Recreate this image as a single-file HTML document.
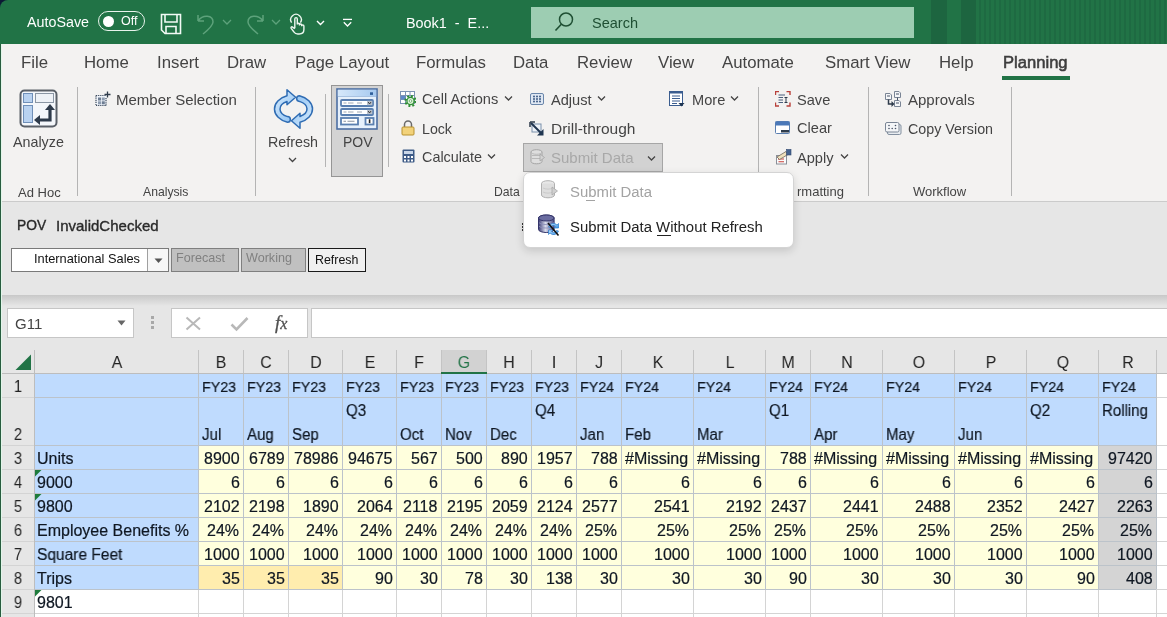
<!DOCTYPE html><html><head><meta charset="utf-8"><style>
html,body{margin:0;padding:0;width:1167px;height:617px;overflow:hidden;background:#fff;}
body{position:relative;font-family:"Liberation Sans",sans-serif;}
.t{position:absolute;white-space:nowrap;will-change:transform;}
.r{position:absolute;display:block;}
</style></head><body>
<div class="r" style="left:0px;top:0px;width:10px;height:10px;background:#0c1934;"></div>
<div class="r" style="left:0px;top:0px;width:1167px;height:44px;background:#217346;border-top-left-radius:8px;"></div>
<div class="r" style="left:931px;top:0px;width:16px;height:44px;background:#1d6540;"></div>
<div class="r" style="left:961px;top:0px;width:15px;height:44px;background:#1d6540;"></div>
<div class="r" style="left:976px;top:0;width:191px;height:44px;background:repeating-linear-gradient(90deg,#217346 0 3px,#1e6a42 3px 5px)"></div>
<div class="t" style="left:27px;top:14.90px;font-size:14.3px;line-height:14.3px;color:#fff;">AutoSave</div>
<div class="r" style="left:98px;top:11px;width:47px;height:20px;background:transparent;border:1.5px solid #e8f3ec;border-radius:11px;box-sizing:border-box;"></div>
<div class="r" style="left:103px;top:16px;width:11px;height:11px;border-radius:50%;background:#fff"></div>
<div class="t" style="left:121px;top:14.92px;font-size:12.5px;line-height:12.5px;color:#fff;">Off</div>
<svg class="r" style="left:160px;top:13px;" width="22" height="22" viewBox="0 0 22 22"><path d="M1.5 1.5 H20.5 V20.5 H5 L1.5 17 Z" fill="none" stroke="#f2faf5" stroke-width="1.6"/><path d="M5 1.5 V9 H17 V1.5" fill="none" stroke="#f2faf5" stroke-width="1.6"/><path d="M6 20.5 V13.5 H16 V20.5" fill="none" stroke="#f2faf5" stroke-width="1.6"/></svg>
<svg class="r" style="left:196px;top:13px;" width="22" height="22" viewBox="0 0 22 22"><path d="M2 8 L2 2 M2 8 L8 8 M2 8 C7 1 17 2 17 9 C17 13 12 17 7 21" fill="none" stroke="#5da27b" stroke-width="1.5"/></svg>
<svg class="r" style="left:222px;top:19px;" width="10" height="7" viewBox="0 0 10 7"><path d="M1 1 L5 5 L9 1" fill="none" stroke="#5da27b" stroke-width="1.3"/></svg>
<svg class="r" style="left:244px;top:13px;" width="22" height="22" viewBox="0 0 22 22"><path d="M19 2 L19 8 M19 8 L13 8 M19 8 C14 1 4 2 4 9 C4 13 9 17 14 21" fill="none" stroke="#5da27b" stroke-width="1.5"/></svg>
<svg class="r" style="left:271px;top:19px;" width="10" height="7" viewBox="0 0 10 7"><path d="M1 1 L5 5 L9 1" fill="none" stroke="#5da27b" stroke-width="1.3"/></svg>
<svg class="r" style="left:288px;top:13px;" width="18" height="22" viewBox="0 0 18 22"><path d="M3.6 9.6 A5.3 5.3 0 1 1 12.4 9.6" fill="none" stroke="#eef8f1" stroke-width="1.4"/><path d="M6.8 15.2 V5.9 A1.25 1.25 0 0 1 9.3 5.9 V11.6 M9.3 11.4 A1.1 1.1 0 0 1 11.5 11.4 V12.6 M11.5 12.1 A1.1 1.1 0 0 1 13.7 12.1 V13.2 M13.7 13 A1.1 1.1 0 0 1 15.9 13 V16.5 C15.9 19.6 14.2 21 11.2 21 H9.8 C7.8 21 6.8 20.2 5.8 18.8 L3.2 15.4 C2.6 14.4 3.6 13.4 4.6 14.1 L6.8 15.8" fill="none" stroke="#eef8f1" stroke-width="1.4" stroke-linejoin="round"/></svg>
<svg class="r" style="left:316px;top:20px;" width="9" height="6" viewBox="0 0 9 6"><path d="M1 1 L4.5 4.5 L8 1" fill="none" stroke="#fff" stroke-width="1.4"/></svg>
<svg class="r" style="left:342px;top:18px;" width="11" height="10" viewBox="0 0 11 10"><path d="M1 1.4 H10" stroke="#fff" stroke-width="1.3"/><path d="M1.8 4.2 L5.5 8 L9.2 4.2" fill="none" stroke="#fff" stroke-width="1.3"/></svg>
<div class="t" style="left:405.5px;top:16.41px;font-size:14.4px;line-height:14.4px;color:#fff;">Book1&nbsp; -&nbsp; E...</div>
<div class="r" style="left:531px;top:7px;width:383px;height:31px;background:#9dcdb2;"></div>
<svg class="r" style="left:553px;top:11px;" width="22" height="22" viewBox="0 0 22 22"><circle cx="13" cy="8.5" r="6.5" fill="none" stroke="#1f4f33" stroke-width="1.5"/><path d="M8.3 13.2 L2.5 19.5" stroke="#1f4f33" stroke-width="1.6"/></svg>
<div class="t" style="left:592px;top:15.73px;font-size:14.5px;line-height:14.5px;color:#1f4f33;">Search</div>
<div class="r" style="left:0px;top:44px;width:1167px;height:157px;background:#f3f2f1;"></div>
<div class="t" style="left:21px;top:55.08px;font-size:16.8px;line-height:16.8px;color:#444;">File</div>
<div class="t" style="left:83.5px;top:55.08px;font-size:16.8px;line-height:16.8px;color:#444;">Home</div>
<div class="t" style="left:157px;top:55.08px;font-size:16.8px;line-height:16.8px;color:#444;">Insert</div>
<div class="t" style="left:227px;top:55.08px;font-size:16.8px;line-height:16.8px;color:#444;">Draw</div>
<div class="t" style="left:295px;top:55.08px;font-size:16.8px;line-height:16.8px;color:#444;">Page Layout</div>
<div class="t" style="left:416px;top:55.08px;font-size:16.8px;line-height:16.8px;color:#444;">Formulas</div>
<div class="t" style="left:513px;top:55.08px;font-size:16.8px;line-height:16.8px;color:#444;">Data</div>
<div class="t" style="left:577px;top:55.08px;font-size:16.8px;line-height:16.8px;color:#444;">Review</div>
<div class="t" style="left:658px;top:55.08px;font-size:16.8px;line-height:16.8px;color:#444;">View</div>
<div class="t" style="left:722px;top:55.08px;font-size:16.8px;line-height:16.8px;color:#444;">Automate</div>
<div class="t" style="left:825px;top:55.08px;font-size:16.8px;line-height:16.8px;color:#444;">Smart View</div>
<div class="t" style="left:939px;top:55.08px;font-size:16.8px;line-height:16.8px;color:#444;">Help</div>
<div class="t" style="left:1002.8px;top:55.25px;font-size:16.6px;line-height:16.6px;color:#3d3d3d;-webkit-text-stroke:0.55px #3d3d3d;">Planning</div>
<div class="r" style="left:1002px;top:76px;width:68px;height:4px;background:#217346;"></div>
<div class="r" style="left:0px;top:201px;width:1167px;height:1px;background:#cbcbcb;"></div>
<div class="r" style="left:77px;top:87px;width:1px;height:109px;background:#b4b4b4;"></div>
<div class="r" style="left:255px;top:87px;width:1px;height:109px;background:#b4b4b4;"></div>
<div class="r" style="left:325px;top:94px;width:1px;height:73px;background:#b4b4b4;"></div>
<div class="r" style="left:388px;top:94px;width:1px;height:73px;background:#b4b4b4;"></div>
<div class="r" style="left:758px;top:87px;width:1px;height:109px;background:#b4b4b4;"></div>
<div class="r" style="left:868px;top:87px;width:1px;height:109px;background:#b4b4b4;"></div>
<div class="r" style="left:1011px;top:87px;width:1px;height:109px;background:#b4b4b4;"></div>
<svg class="r" style="left:19px;top:89px;" width="40" height="40" viewBox="0 0 40 40"><rect x="1.5" y="1.5" width="36" height="36" rx="4" fill="#f4f7fb" stroke="#5a6068" stroke-width="2"/><rect x="4.5" y="4.5" width="9" height="9" fill="#b9d2f0" stroke="#6f8fb8" stroke-width="1"/><rect x="4.5" y="16.5" width="9" height="17" fill="#b9d2f0" stroke="#6f8fb8" stroke-width="1"/><rect x="16.5" y="4.5" width="18" height="9" fill="#eef2f7" stroke="#8a96a4" stroke-width="1"/><path d="M31 19 V31 H19" fill="none" stroke="#2e3b4b" stroke-width="3.2"/><path d="M31 15 L26 21 H36 Z" fill="#2e3b4b"/><path d="M15 31 L21 26 V36 Z" fill="#2e3b4b"/></svg>
<div class="t" style="left:13.2px;top:135.10px;font-size:14.3px;line-height:14.3px;color:#444;">Analyze</div>
<div class="t" style="left:17.5px;top:185.50px;font-size:13px;line-height:13px;color:#444;">Ad Hoc</div>
<svg class="r" style="left:95px;top:91px;" width="16" height="16" viewBox="0 0 16 16"><rect x="1" y="4" width="10.5" height="11" fill="#eef3f9"/><path d="M1 4.5 H11 M1 14.5 H11 M1 4.5 V14.5 M11 7 V14.5" fill="none" stroke="#3c4a5c" stroke-width="1.2" stroke-dasharray="1.2 0.9"/><rect x="3" y="6.5" width="3" height="3" fill="#6d7d92"/><rect x="6.8" y="6.5" width="3" height="3" fill="#8d9cb0"/><rect x="3" y="10.3" width="3" height="3" fill="#8d9cb0"/><rect x="6.8" y="10.3" width="3" height="3" fill="#6d7d92"/><path d="M12.5 0.5 V6.5 M9.5 3.5 H15.5" stroke="#2e3b4b" stroke-width="1.3"/></svg>
<div class="t" style="left:116.3px;top:92.00px;font-size:15px;line-height:15px;color:#444;">Member Selection</div>
<div class="t" style="left:143px;top:186.27px;font-size:12.2px;line-height:12.2px;color:#444;">Analysis</div>
<svg class="r" style="left:272px;top:88px;" width="43" height="42" viewBox="0 0 43 42"><defs><linearGradient id="rg" x1="0" y1="0" x2="1" y2="1"><stop offset="0" stop-color="#d8ecfd"/><stop offset="1" stop-color="#8cc0f2"/></linearGradient></defs><g id="arr"><path d="M15 7.84 A19 14 0 0 0 15.5 34.28 A2.84 2.84 0 0 0 15.5 28.6 A13.5 8.5 0 0 1 15 13.55 L15 16.8 L23.6 9.2 L15 1.7 Z" fill="url(#rg)" stroke="#2f6cb3" stroke-width="1.5" stroke-linejoin="round"/></g><use href="#arr" transform="rotate(180 21.5 21)"/></svg>
<div class="t" style="left:268.3px;top:134.90px;font-size:14.3px;line-height:14.3px;color:#444;">Refresh</div>
<svg class="r" style="left:288px;top:157px;" width="10" height="7" viewBox="0 0 10 7"><path d="M1 1 L4.5 4.5 L8 1" fill="none" stroke="#444" stroke-width="1.3"/></svg>
<div class="r" style="left:331px;top:85px;width:52px;height:92px;background:#d3d3d3;border:1px solid #959595;box-sizing:border-box;"></div>
<svg class="r" style="left:336px;top:88px;" width="42" height="42" viewBox="0 0 42 42"><defs><linearGradient id="pg" x1="0" y1="0" x2="1" y2="0"><stop offset="0" stop-color="#d6e8fa"/><stop offset="1" stop-color="#a6c9ef"/></linearGradient></defs><rect x="1" y="1" width="40" height="40" fill="#e6f0fb" stroke="#4d6fa3" stroke-width="1.6"/><rect x="1.8" y="1.8" width="38.4" height="6.4" fill="url(#pg)"/><path d="M1.8 8.5 H40.2" stroke="#9bb8da" stroke-width="0.8"/><rect x="34" y="4.3" width="3" height="2.6" fill="#2f5f9a"/><rect x="5" y="12" width="32" height="6" rx="1" fill="#fff" stroke="#5a7fb0" stroke-width="1.8"/><path d="M7.5 15 H10.5 M12 15 H17.5 M21 15 H26" stroke="#a0a8b4" stroke-width="1.1"/><rect x="31" y="12.9" width="5.2" height="4.2" fill="#b9c0ca"/><path d="M32.2 14 L33.6 16 L35 14" fill="none" stroke="#333" stroke-width="0.9"/><rect x="5" y="21" width="32" height="6" rx="1" fill="#fff" stroke="#5a7fb0" stroke-width="1.8"/><path d="M7.5 24 H10.5 M12 24 H17.5 M21 24 H26" stroke="#a0a8b4" stroke-width="1.1"/><rect x="31" y="21.9" width="5.2" height="4.2" fill="#b9c0ca"/><path d="M32.2 23 L33.6 25 L35 23" fill="none" stroke="#333" stroke-width="0.9"/><rect x="5" y="30" width="17" height="6.5" fill="#fff" stroke="#5a7fb0" stroke-width="1.8"/><path d="M7.5 33.2 H10 M11.5 33.2 H18.5" stroke="#8a93a0" stroke-width="1.1"/><rect x="29.5" y="30" width="8" height="6.5" fill="#fff" stroke="#5a7fb0" stroke-width="1.8"/><rect x="32.8" y="31.3" width="1.6" height="3.8" fill="#222"/></svg>
<div class="t" style="left:343px;top:134.95px;font-size:14px;line-height:14px;color:#444;">POV</div>
<svg class="r" style="left:399px;top:90px;" width="17" height="17" viewBox="0 0 17 17"><rect x="1.5" y="1.5" width="14" height="12" fill="#fff" stroke="#7d93b3" stroke-width="1"/><path d="M1.5 5.5 H15.5 M1.5 9.5 H15.5 M6.5 1.5 V13.5 M11 1.5 V13.5" stroke="#7d93b3" stroke-width="1"/><rect x="2" y="6" width="4.5" height="3.5" fill="#5f88c8"/><circle cx="11.5" cy="11" r="5" fill="none" stroke="#2f8f35" stroke-width="2.2" stroke-dasharray="1.9 2.02"/><circle cx="11.5" cy="11" r="3.6" fill="#dff3da" stroke="#2f8f35" stroke-width="1.3"/><circle cx="11.5" cy="11" r="1.3" fill="#fff" stroke="#4aa04a" stroke-width="0.7"/></svg>
<div class="t" style="left:422.4px;top:92.34px;font-size:14.6px;line-height:14.6px;color:#444;">Cell Actions</div>
<svg class="r" style="left:504px;top:95px;" width="9" height="7" viewBox="0 0 9 7"><path d="M1 1.5 L4.5 5 L8 1.5" fill="none" stroke="#444" stroke-width="1.3"/></svg>
<svg class="r" style="left:401px;top:120px;" width="14" height="16" viewBox="0 0 14 16"><path d="M3.5 7 V4.5 A3.5 3.5 0 0 1 10.5 4.5 V7" fill="none" stroke="#6b6b6b" stroke-width="1.5"/><rect x="1" y="7" width="12" height="8" rx="1" fill="#f2d27a" stroke="#b8912e" stroke-width="1"/></svg>
<div class="t" style="left:422.4px;top:121.58px;font-size:14.2px;line-height:14.2px;color:#444;">Lock</div>
<svg class="r" style="left:402px;top:149px;" width="13" height="15" viewBox="0 0 13 15"><rect x="0.5" y="0.5" width="12" height="13" rx="1" fill="#3d5a86"/><rect x="2" y="2" width="9" height="3" fill="#c9d6e8"/><g fill="#fff"><rect x="2" y="7" width="2" height="2"/><rect x="5.5" y="7" width="2" height="2"/><rect x="9" y="7" width="2" height="2"/><rect x="2" y="10.5" width="2" height="2"/><rect x="5.5" y="10.5" width="2" height="2"/><rect x="9" y="10.5" width="2" height="2"/></g></svg>
<div class="t" style="left:422.4px;top:150.11px;font-size:14.4px;line-height:14.4px;color:#444;">Calculate</div>
<svg class="r" style="left:487px;top:153px;" width="9" height="7" viewBox="0 0 9 7"><path d="M1 1.5 L4.5 5 L8 1.5" fill="none" stroke="#444" stroke-width="1.3"/></svg>
<svg class="r" style="left:530px;top:93px;" width="15" height="13" viewBox="0 0 15 13"><rect x="0.5" y="0.5" width="13" height="11" rx="1.5" fill="#dfe8f3" stroke="#6a86aa" stroke-width="1"/><g fill="#3e5c86"><circle cx="4" cy="3.5" r="1"/><circle cx="7" cy="3.5" r="1"/><circle cx="10" cy="3.5" r="1"/><circle cx="4" cy="6" r="1"/><circle cx="7" cy="6" r="1"/><circle cx="10" cy="6" r="1"/><circle cx="4" cy="8.5" r="1"/><circle cx="7" cy="8.5" r="1"/><circle cx="10" cy="8.5" r="1"/></g></svg>
<div class="t" style="left:551.3px;top:92.64px;font-size:14.6px;line-height:14.6px;color:#444;">Adjust</div>
<svg class="r" style="left:597px;top:95px;" width="9" height="7" viewBox="0 0 9 7"><path d="M1 1.5 L4.5 5 L8 1.5" fill="none" stroke="#444" stroke-width="1.3"/></svg>
<svg class="r" style="left:529px;top:121px;" width="16" height="15" viewBox="0 0 16 15"><path d="M1 1 H6 M1 1 V6" stroke="#2e3b4b" stroke-width="1.5" fill="none"/><rect x="3" y="3" width="9" height="8" fill="#eef3f9" stroke="#7a90ab" stroke-width="1"/><path d="M2 2 L12 12" stroke="#1f3550" stroke-width="2"/><path d="M14.5 14.5 L14.5 8 L8 14.5 Z" fill="#1f3550"/></svg>
<div class="t" style="left:551.3px;top:120.88px;font-size:15.5px;line-height:15.5px;color:#444;">Drill-through</div>
<div class="r" style="left:523px;top:143px;width:140px;height:29px;background:#d2d2d2;border:1px solid #a6a6a6;box-sizing:border-box;"></div>
<svg class="r" style="left:530px;top:149px;" width="15" height="16" viewBox="0 0 15 16"><path d="M1 3 A5.5 2.3 0 0 1 12 3 V12.5 A5.5 2.3 0 0 1 1 12.5 Z" fill="#dedede" stroke="#a4a4a4" stroke-width="1"/><path d="M1 3 A5.5 2.3 0 0 0 12 3 M2 6.5 H11 M2 9.5 H11" fill="none" stroke="#b4b4b4" stroke-width="0.9"/><path d="M10 5 L14.5 8.5 L10 12 Z" fill="#d4d4d4" stroke="#a4a4a4" stroke-width="0.8"/></svg>
<div class="t" style="left:551.3px;top:149.90px;font-size:15px;line-height:15px;color:#a8a8a8;">Submit Data</div>
<svg class="r" style="left:647px;top:155px;" width="9" height="7" viewBox="0 0 9 7"><path d="M1 1.5 L4.5 5 L8 1.5" fill="none" stroke="#444" stroke-width="1.3"/></svg>
<svg class="r" style="left:669px;top:91px;" width="16" height="16" viewBox="0 0 16 16"><rect x="0.5" y="0.5" width="13" height="14" fill="#fff" stroke="#3a5d8f" stroke-width="1"/><rect x="0.5" y="0.5" width="13" height="2" fill="#3a5d8f"/><path d="M3 5 H11 M3 7.5 H11 M3 10 H11 M3 12.5 H8" stroke="#3a5d8f" stroke-width="1"/><path d="M9.5 12 H15.5 L12.5 15.5 Z" fill="#1f3550"/></svg>
<div class="t" style="left:691.7px;top:92.64px;font-size:14.6px;line-height:14.6px;color:#444;">More</div>
<svg class="r" style="left:730px;top:95px;" width="9" height="7" viewBox="0 0 9 7"><path d="M1 1.5 L4.5 5 L8 1.5" fill="none" stroke="#444" stroke-width="1.3"/></svg>
<div class="t" style="left:493.8px;top:186.27px;font-size:12.2px;line-height:12.2px;color:#444;">Data</div>
<svg class="r" style="left:775px;top:91px;" width="16" height="16" viewBox="0 0 16 16"><g stroke="#b8403a" stroke-width="1.4" fill="none"><path d="M0.5 4 V0.5 H4 M11.5 0.5 H15 V4 M15 11.5 V15 H11.5 M4 15 H0.5 V11.5"/></g><path d="M3.5 4 H10 M3.5 6.5 H8 M3.5 9 H8 M3.5 11.5 H8" stroke="#4a5f7c" stroke-width="1"/><path d="M9.5 6.5 H12.5 M11 6.5 V11.5 M9.5 11.5 H12.5" stroke="#2e3b4b" stroke-width="1"/></svg>
<div class="t" style="left:797.4px;top:92.64px;font-size:14.6px;line-height:14.6px;color:#444;">Save</div>
<svg class="r" style="left:775px;top:121px;" width="16" height="14" viewBox="0 0 16 14"><rect x="0.5" y="0.5" width="14" height="12" rx="1" fill="#fff" stroke="#5a7fb0" stroke-width="1"/><rect x="0.5" y="0.5" width="14" height="4" fill="#4a78b8"/><rect x="6" y="9" width="8" height="2.5" fill="#2e3b4b"/></svg>
<div class="t" style="left:797.4px;top:121.24px;font-size:14.6px;line-height:14.6px;color:#444;">Clear</div>
<svg class="r" style="left:775px;top:149px;" width="17" height="16" viewBox="0 0 17 16"><rect x="1.5" y="6.5" width="10" height="8.5" fill="#fbfbfb" stroke="#8a8f98" stroke-width="1"/><path d="M3.5 10 H9 M3.5 12.8 H9" stroke="#c8403a" stroke-width="1.1"/><rect x="3.3" y="9.3" width="1.2" height="1.4" fill="#c8403a"/><path d="M2 8 L11 2.5 L13 5.5 L4.5 10.5 Z" fill="#efe0bc" stroke="#7d7466" stroke-width="0.9"/><rect x="11.5" y="0.5" width="4.5" height="5.5" fill="#46638f" stroke="#2e466e" stroke-width="0.6"/></svg>
<div class="t" style="left:797.4px;top:150.64px;font-size:14.6px;line-height:14.6px;color:#444;">Apply</div>
<svg class="r" style="left:840px;top:153px;" width="9" height="7" viewBox="0 0 9 7"><path d="M1 1.5 L4.5 5 L8 1.5" fill="none" stroke="#444" stroke-width="1.3"/></svg>
<div class="t" style="left:796.6px;top:185.30px;font-size:13px;line-height:13px;color:#444;">rmatting</div>
<svg class="r" style="left:884px;top:90px;" width="18" height="18" viewBox="0 0 18 18"><path d="M1.5 3.5 H6 L7.5 5 V9.5 H1.5 Z" fill="#f4f6f8" stroke="#7a8595"/><path d="M10.5 1.5 H15 L16.5 3 V7.5 H10.5 Z" fill="#f4f6f8" stroke="#7a8595"/><path d="M10.5 10.5 H15 L16.5 12 V16.5 H10.5 Z" fill="#f4f6f8" stroke="#7a8595"/><path d="M3 6 H6 M12 4 H15 M12 13 H15 M13.5 7.5 V10.5" stroke="#4a5568" stroke-width="1"/><path d="M4.5 9.5 V14 H8" stroke="#2e3b4b" stroke-width="1.5" fill="none"/><path d="M7.5 11 L10.5 14 L7.5 17 Z" fill="#2e3b4b"/></svg>
<div class="t" style="left:907.5px;top:92.30px;font-size:15px;line-height:15px;color:#444;">Approvals</div>
<svg class="r" style="left:884px;top:122px;" width="18" height="13" viewBox="0 0 18 13"><rect x="3.5" y="2.5" width="13.5" height="10" rx="1.5" fill="#e8ecf0" stroke="#8390a0"/><rect x="1.5" y="0.5" width="13.5" height="9.5" rx="1.5" fill="#f4f6f8" stroke="#7a8595"/><g fill="#4a5568"><circle cx="5" cy="3.5" r="0.8"/><circle cx="5" cy="6.5" r="0.8"/><circle cx="8.2" cy="6.5" r="0.8"/><circle cx="11.5" cy="3.5" r="0.8"/><circle cx="11.5" cy="6.5" r="0.8"/></g></svg>
<div class="t" style="left:907.5px;top:121.90px;font-size:14.3px;line-height:14.3px;color:#444;">Copy Version</div>
<div class="t" style="left:912.6px;top:185.30px;font-size:13px;line-height:13px;color:#444;">Workflow</div>
<div class="r" style="left:0px;top:202px;width:1167px;height:93px;background:#e6e6e6;"></div>
<div class="r" style="left:0px;top:295px;width:1167px;height:1px;background:#c9c9c9;"></div>
<div class="r" style="left:0;top:296px;width:1167px;height:10px;background:linear-gradient(#cbcbcb,#e6e6e6)"></div>
<div class="r" style="left:0px;top:306px;width:1167px;height:44px;background:#e6e6e6;"></div>
<div class="t" style="left:16.7px;top:219.32px;font-size:13.8px;line-height:13.8px;color:#2a2a2a;-webkit-text-stroke:0.35px #2a2a2a;">POV</div>
<div class="t" style="left:55.5px;top:218.30px;font-size:15px;line-height:15px;color:#2a2a2a;-webkit-text-stroke:0.35px #2a2a2a;">InvalidChecked</div>
<div class="r" style="left:11px;top:248px;width:158px;height:24px;background:#fff;border:1px solid #7a7a7a;box-sizing:border-box;"></div>
<div class="r" style="left:147px;top:249px;width:1px;height:22px;background:#a0a0a0;"></div>
<div class="r" style="left:148px;top:249px;width:20px;height:22px;background:#f7f7f7;"></div>
<svg class="r" style="left:154px;top:258px;" width="9" height="6" viewBox="0 0 9 6"><path d="M0.5 0.5 H8.5 L4.5 5 Z" fill="#555"/></svg>
<div class="t" style="left:33.6px;top:253.16px;font-size:12.8px;line-height:12.8px;color:#111;">International Sales</div>
<div class="r" style="left:171px;top:248px;width:68px;height:24px;background:#c0c0c0;border:1px solid #7f7f7f;box-sizing:border-box;"></div>
<div class="t" style="left:176px;top:252.33px;font-size:12.6px;line-height:12.6px;color:#808080;">Forecast</div>
<div class="r" style="left:241px;top:248px;width:65px;height:24px;background:#c0c0c0;border:1px solid #7f7f7f;box-sizing:border-box;"></div>
<div class="t" style="left:246px;top:252.33px;font-size:12.6px;line-height:12.6px;color:#808080;">Working</div>
<div class="r" style="left:308px;top:248px;width:58px;height:24px;background:#f0f0f0;border:1.5px solid #1a1a1a;box-sizing:border-box;"></div>
<div class="t" style="left:315.3px;top:254.20px;font-size:12.4px;line-height:12.4px;color:#111;">Refresh</div>
<div class="r" style="left:521.5px;top:223px;width:1.5px;height:8px;background:#333;background:repeating-linear-gradient(#333 0 2px,transparent 2px 3px)"></div>
<div class="r" style="left:7px;top:308px;width:127px;height:30px;background:#fff;border:1px solid #c6c6c6;box-sizing:border-box;"></div>
<div class="t" style="left:14.6px;top:316.30px;font-size:15px;line-height:15px;color:#444;">G11</div>
<svg class="r" style="left:117px;top:320px;" width="9" height="6" viewBox="0 0 9 6"><path d="M0.5 0.5 H8.5 L4.5 5.5 Z" fill="#666"/></svg>
<div class="r" style="left:151px;top:316px;width:3px;height:3px;background:#a8a8a8;"></div>
<div class="r" style="left:151px;top:321px;width:3px;height:3px;background:#a8a8a8;"></div>
<div class="r" style="left:151px;top:326px;width:3px;height:3px;background:#a8a8a8;"></div>
<div class="r" style="left:171px;top:308px;width:137px;height:30px;background:#fff;border:1px solid #c6c6c6;box-sizing:border-box;"></div>
<svg class="r" style="left:185px;top:316px;" width="17" height="15" viewBox="0 0 17 15"><path d="M1.5 1.5 L15 13.5 M15 1.5 L1.5 13.5" stroke="#b8b8b8" stroke-width="2"/></svg>
<svg class="r" style="left:230px;top:316px;" width="19" height="16" viewBox="0 0 19 16"><path d="M1.5 8.5 L6.5 13.5 L17.5 2" fill="none" stroke="#b8b8b8" stroke-width="2.6"/></svg>
<div class="t" style="left:275px;top:312.92px;font-size:19px;line-height:19px;color:#505050;font-family:'Liberation Serif',serif;-webkit-text-stroke:0.3px #505050;"><i>f</i><i style="font-size:16px">x</i></div>
<div class="r" style="left:311px;top:308px;width:856px;height:30px;background:#fff;border:1px solid #c6c6c6;border-right:none;box-sizing:border-box;"></div>
<div class="r" style="left:1px;top:374px;width:1166px;height:243px;background:#fff;"></div>
<div class="r" style="left:1px;top:350px;width:1166px;height:23px;background:#e6e6e6;"></div>
<div class="r" style="left:1px;top:374px;width:33px;height:243px;background:#e6e6e6;"></div>
<div class="r" style="left:442px;top:350px;width:44px;height:23px;background:#d2d2d2;"></div>
<div class="r" style="left:441px;top:372px;width:46px;height:2px;background:#217346;"></div>
<svg class="r" style="left:15px;top:354px;" width="17" height="17" viewBox="0 0 17 17"><path d="M16 0.5 V16 H0.5 Z" fill="#217346"/></svg>
<div class="r" style="left:34px;top:373px;width:1122px;height:72px;background:#bfdbfe;"></div>
<div class="r" style="left:34px;top:445px;width:164px;height:144px;background:#bfdbfe;"></div>
<div class="r" style="left:198px;top:445px;width:900px;height:144px;background:#ffffdd;"></div>
<div class="r" style="left:198px;top:565px;width:144px;height:24px;background:#ffedae;"></div>
<div class="r" style="left:1098px;top:445px;width:58px;height:144px;background:#d4d4d4;"></div>
<div class="r" style="left:1px;top:373px;width:1166px;height:1px;background:#c8c8c8;"></div>
<div class="r" style="left:1px;top:397px;width:1166px;height:1px;background:#d4d4d4;"></div>
<div class="r" style="left:1px;top:445px;width:1166px;height:1px;background:#d4d4d4;"></div>
<div class="r" style="left:1px;top:469px;width:1166px;height:1px;background:#d4d4d4;"></div>
<div class="r" style="left:1px;top:493px;width:1166px;height:1px;background:#d4d4d4;"></div>
<div class="r" style="left:1px;top:517px;width:1166px;height:1px;background:#d4d4d4;"></div>
<div class="r" style="left:1px;top:541px;width:1166px;height:1px;background:#d4d4d4;"></div>
<div class="r" style="left:1px;top:565px;width:1166px;height:1px;background:#d4d4d4;"></div>
<div class="r" style="left:1px;top:589px;width:1166px;height:1px;background:#d4d4d4;"></div>
<div class="r" style="left:1px;top:613px;width:1166px;height:1px;background:#d4d4d4;"></div>
<div class="r" style="left:1px;top:373px;width:1166px;height:1px;background:#bdbdbd;"></div>
<div class="r" style="left:34px;top:350px;width:1px;height:23px;background:#c4c4c4;"></div>
<div class="r" style="left:34px;top:374px;width:1px;height:243px;background:#d4d4d4;"></div>
<div class="r" style="left:198px;top:350px;width:1px;height:23px;background:#c4c4c4;"></div>
<div class="r" style="left:198px;top:374px;width:1px;height:243px;background:#d4d4d4;"></div>
<div class="r" style="left:243px;top:350px;width:1px;height:23px;background:#c4c4c4;"></div>
<div class="r" style="left:243px;top:374px;width:1px;height:243px;background:#d4d4d4;"></div>
<div class="r" style="left:288px;top:350px;width:1px;height:23px;background:#c4c4c4;"></div>
<div class="r" style="left:288px;top:374px;width:1px;height:243px;background:#d4d4d4;"></div>
<div class="r" style="left:342px;top:350px;width:1px;height:23px;background:#c4c4c4;"></div>
<div class="r" style="left:342px;top:374px;width:1px;height:243px;background:#d4d4d4;"></div>
<div class="r" style="left:396px;top:350px;width:1px;height:23px;background:#c4c4c4;"></div>
<div class="r" style="left:396px;top:374px;width:1px;height:243px;background:#d4d4d4;"></div>
<div class="r" style="left:441px;top:350px;width:1px;height:23px;background:#c4c4c4;"></div>
<div class="r" style="left:441px;top:374px;width:1px;height:243px;background:#d4d4d4;"></div>
<div class="r" style="left:486px;top:350px;width:1px;height:23px;background:#c4c4c4;"></div>
<div class="r" style="left:486px;top:374px;width:1px;height:243px;background:#d4d4d4;"></div>
<div class="r" style="left:531px;top:350px;width:1px;height:23px;background:#c4c4c4;"></div>
<div class="r" style="left:531px;top:374px;width:1px;height:243px;background:#d4d4d4;"></div>
<div class="r" style="left:576px;top:350px;width:1px;height:23px;background:#c4c4c4;"></div>
<div class="r" style="left:576px;top:374px;width:1px;height:243px;background:#d4d4d4;"></div>
<div class="r" style="left:621px;top:350px;width:1px;height:23px;background:#c4c4c4;"></div>
<div class="r" style="left:621px;top:374px;width:1px;height:243px;background:#d4d4d4;"></div>
<div class="r" style="left:693px;top:350px;width:1px;height:23px;background:#c4c4c4;"></div>
<div class="r" style="left:693px;top:374px;width:1px;height:243px;background:#d4d4d4;"></div>
<div class="r" style="left:765px;top:350px;width:1px;height:23px;background:#c4c4c4;"></div>
<div class="r" style="left:765px;top:374px;width:1px;height:243px;background:#d4d4d4;"></div>
<div class="r" style="left:810px;top:350px;width:1px;height:23px;background:#c4c4c4;"></div>
<div class="r" style="left:810px;top:374px;width:1px;height:243px;background:#d4d4d4;"></div>
<div class="r" style="left:882px;top:350px;width:1px;height:23px;background:#c4c4c4;"></div>
<div class="r" style="left:882px;top:374px;width:1px;height:243px;background:#d4d4d4;"></div>
<div class="r" style="left:954px;top:350px;width:1px;height:23px;background:#c4c4c4;"></div>
<div class="r" style="left:954px;top:374px;width:1px;height:243px;background:#d4d4d4;"></div>
<div class="r" style="left:1026px;top:350px;width:1px;height:23px;background:#c4c4c4;"></div>
<div class="r" style="left:1026px;top:374px;width:1px;height:243px;background:#d4d4d4;"></div>
<div class="r" style="left:1098px;top:350px;width:1px;height:23px;background:#c4c4c4;"></div>
<div class="r" style="left:1098px;top:374px;width:1px;height:243px;background:#d4d4d4;"></div>
<div class="r" style="left:1156px;top:350px;width:1px;height:23px;background:#c4c4c4;"></div>
<div class="r" style="left:1156px;top:374px;width:1px;height:243px;background:#d4d4d4;"></div>
<div class="r" style="left:34px;top:350px;width:1px;height:267px;background:#bdbdbd;"></div>
<div class="r" style="left:35px;top:397px;width:1121px;height:1px;background:#bcc3ca;"></div>
<div class="r" style="left:35px;top:445px;width:1121px;height:1px;background:#bcc3ca;"></div>
<div class="r" style="left:35px;top:469px;width:1121px;height:1px;background:#bcc3ca;"></div>
<div class="r" style="left:35px;top:493px;width:1121px;height:1px;background:#bcc3ca;"></div>
<div class="r" style="left:35px;top:517px;width:1121px;height:1px;background:#bcc3ca;"></div>
<div class="r" style="left:35px;top:541px;width:1121px;height:1px;background:#bcc3ca;"></div>
<div class="r" style="left:35px;top:565px;width:1121px;height:1px;background:#bcc3ca;"></div>
<div class="r" style="left:35px;top:589px;width:1121px;height:1px;background:#bcc3ca;"></div>
<div class="r" style="left:198px;top:374px;width:1px;height:215px;background:#bcc3ca;"></div>
<div class="r" style="left:243px;top:374px;width:1px;height:215px;background:#bcc3ca;"></div>
<div class="r" style="left:288px;top:374px;width:1px;height:215px;background:#bcc3ca;"></div>
<div class="r" style="left:342px;top:374px;width:1px;height:215px;background:#bcc3ca;"></div>
<div class="r" style="left:396px;top:374px;width:1px;height:215px;background:#bcc3ca;"></div>
<div class="r" style="left:441px;top:374px;width:1px;height:215px;background:#bcc3ca;"></div>
<div class="r" style="left:486px;top:374px;width:1px;height:215px;background:#bcc3ca;"></div>
<div class="r" style="left:531px;top:374px;width:1px;height:215px;background:#bcc3ca;"></div>
<div class="r" style="left:576px;top:374px;width:1px;height:215px;background:#bcc3ca;"></div>
<div class="r" style="left:621px;top:374px;width:1px;height:215px;background:#bcc3ca;"></div>
<div class="r" style="left:693px;top:374px;width:1px;height:215px;background:#bcc3ca;"></div>
<div class="r" style="left:765px;top:374px;width:1px;height:215px;background:#bcc3ca;"></div>
<div class="r" style="left:810px;top:374px;width:1px;height:215px;background:#bcc3ca;"></div>
<div class="r" style="left:882px;top:374px;width:1px;height:215px;background:#bcc3ca;"></div>
<div class="r" style="left:954px;top:374px;width:1px;height:215px;background:#bcc3ca;"></div>
<div class="r" style="left:1026px;top:374px;width:1px;height:215px;background:#bcc3ca;"></div>
<div class="r" style="left:1098px;top:374px;width:1px;height:215px;background:#bcc3ca;"></div>
<div class="r" style="left:1156px;top:374px;width:1px;height:215px;background:#bcc3ca;"></div>
<div class="r" style="left:441px;top:372px;width:46px;height:2px;background:#217346;"></div>
<div class="t" style="left:16.5px;width:200px;text-align:center;top:354.03px;font-size:16.5px;line-height:16.5px;color:#222;transform:scaleX(0.95);transform-origin:center;">A</div>
<div class="t" style="left:121.0px;width:200px;text-align:center;top:354.03px;font-size:16.5px;line-height:16.5px;color:#222;transform:scaleX(0.95);transform-origin:center;">B</div>
<div class="t" style="left:166.0px;width:200px;text-align:center;top:354.03px;font-size:16.5px;line-height:16.5px;color:#222;transform:scaleX(0.95);transform-origin:center;">C</div>
<div class="t" style="left:215.5px;width:200px;text-align:center;top:354.03px;font-size:16.5px;line-height:16.5px;color:#222;transform:scaleX(0.95);transform-origin:center;">D</div>
<div class="t" style="left:269.5px;width:200px;text-align:center;top:354.03px;font-size:16.5px;line-height:16.5px;color:#222;transform:scaleX(0.95);transform-origin:center;">E</div>
<div class="t" style="left:319.0px;width:200px;text-align:center;top:354.03px;font-size:16.5px;line-height:16.5px;color:#222;transform:scaleX(0.95);transform-origin:center;">F</div>
<div class="t" style="left:364.0px;width:200px;text-align:center;top:354.03px;font-size:16.5px;line-height:16.5px;color:#217346;transform:scaleX(0.95);transform-origin:center;">G</div>
<div class="t" style="left:409.0px;width:200px;text-align:center;top:354.03px;font-size:16.5px;line-height:16.5px;color:#222;transform:scaleX(0.95);transform-origin:center;">H</div>
<div class="t" style="left:454.0px;width:200px;text-align:center;top:354.03px;font-size:16.5px;line-height:16.5px;color:#222;transform:scaleX(0.95);transform-origin:center;">I</div>
<div class="t" style="left:499.0px;width:200px;text-align:center;top:354.03px;font-size:16.5px;line-height:16.5px;color:#222;transform:scaleX(0.95);transform-origin:center;">J</div>
<div class="t" style="left:557.5px;width:200px;text-align:center;top:354.03px;font-size:16.5px;line-height:16.5px;color:#222;transform:scaleX(0.95);transform-origin:center;">K</div>
<div class="t" style="left:629.5px;width:200px;text-align:center;top:354.03px;font-size:16.5px;line-height:16.5px;color:#222;transform:scaleX(0.95);transform-origin:center;">L</div>
<div class="t" style="left:688.0px;width:200px;text-align:center;top:354.03px;font-size:16.5px;line-height:16.5px;color:#222;transform:scaleX(0.95);transform-origin:center;">M</div>
<div class="t" style="left:746.5px;width:200px;text-align:center;top:354.03px;font-size:16.5px;line-height:16.5px;color:#222;transform:scaleX(0.95);transform-origin:center;">N</div>
<div class="t" style="left:818.5px;width:200px;text-align:center;top:354.03px;font-size:16.5px;line-height:16.5px;color:#222;transform:scaleX(0.95);transform-origin:center;">O</div>
<div class="t" style="left:890.5px;width:200px;text-align:center;top:354.03px;font-size:16.5px;line-height:16.5px;color:#222;transform:scaleX(0.95);transform-origin:center;">P</div>
<div class="t" style="left:962.5px;width:200px;text-align:center;top:354.03px;font-size:16.5px;line-height:16.5px;color:#222;transform:scaleX(0.95);transform-origin:center;">Q</div>
<div class="t" style="left:1027.5px;width:200px;text-align:center;top:354.03px;font-size:16.5px;line-height:16.5px;color:#222;transform:scaleX(0.95);transform-origin:center;">R</div>
<div class="t" style="left:-82.5px;width:200px;text-align:center;top:377.61px;font-size:17px;line-height:17px;color:#222;transform:scaleX(0.85);transform-origin:center;">1</div>
<div class="t" style="left:-82.5px;width:200px;text-align:center;top:426.11px;font-size:17px;line-height:17px;color:#222;transform:scaleX(0.85);transform-origin:center;">2</div>
<div class="t" style="left:-82.5px;width:200px;text-align:center;top:449.91px;font-size:17px;line-height:17px;color:#222;transform:scaleX(0.85);transform-origin:center;">3</div>
<div class="t" style="left:-82.5px;width:200px;text-align:center;top:473.91px;font-size:17px;line-height:17px;color:#222;transform:scaleX(0.85);transform-origin:center;">4</div>
<div class="t" style="left:-82.5px;width:200px;text-align:center;top:497.91px;font-size:17px;line-height:17px;color:#222;transform:scaleX(0.85);transform-origin:center;">5</div>
<div class="t" style="left:-82.5px;width:200px;text-align:center;top:521.91px;font-size:17px;line-height:17px;color:#222;transform:scaleX(0.85);transform-origin:center;">6</div>
<div class="t" style="left:-82.5px;width:200px;text-align:center;top:545.91px;font-size:17px;line-height:17px;color:#222;transform:scaleX(0.85);transform-origin:center;">7</div>
<div class="t" style="left:-82.5px;width:200px;text-align:center;top:569.91px;font-size:17px;line-height:17px;color:#222;transform:scaleX(0.85);transform-origin:center;">8</div>
<div class="t" style="left:-82.5px;width:200px;text-align:center;top:593.91px;font-size:17px;line-height:17px;color:#222;transform:scaleX(0.85);transform-origin:center;">9</div>
<div class="t" style="left:201.6px;top:379.30px;font-size:15px;line-height:15px;color:#0f1722;-webkit-text-stroke:0.2px #0f1722;transform:scaleX(0.95);transform-origin:left;">FY23</div>
<div class="t" style="left:246.6px;top:379.30px;font-size:15px;line-height:15px;color:#0f1722;-webkit-text-stroke:0.2px #0f1722;transform:scaleX(0.95);transform-origin:left;">FY23</div>
<div class="t" style="left:291.6px;top:379.30px;font-size:15px;line-height:15px;color:#0f1722;-webkit-text-stroke:0.2px #0f1722;transform:scaleX(0.95);transform-origin:left;">FY23</div>
<div class="t" style="left:345.6px;top:379.30px;font-size:15px;line-height:15px;color:#0f1722;-webkit-text-stroke:0.2px #0f1722;transform:scaleX(0.95);transform-origin:left;">FY23</div>
<div class="t" style="left:399.6px;top:379.30px;font-size:15px;line-height:15px;color:#0f1722;-webkit-text-stroke:0.2px #0f1722;transform:scaleX(0.95);transform-origin:left;">FY23</div>
<div class="t" style="left:444.6px;top:379.30px;font-size:15px;line-height:15px;color:#0f1722;-webkit-text-stroke:0.2px #0f1722;transform:scaleX(0.95);transform-origin:left;">FY23</div>
<div class="t" style="left:489.6px;top:379.30px;font-size:15px;line-height:15px;color:#0f1722;-webkit-text-stroke:0.2px #0f1722;transform:scaleX(0.95);transform-origin:left;">FY23</div>
<div class="t" style="left:534.6px;top:379.30px;font-size:15px;line-height:15px;color:#0f1722;-webkit-text-stroke:0.2px #0f1722;transform:scaleX(0.95);transform-origin:left;">FY23</div>
<div class="t" style="left:579.6px;top:379.30px;font-size:15px;line-height:15px;color:#0f1722;-webkit-text-stroke:0.2px #0f1722;transform:scaleX(0.95);transform-origin:left;">FY24</div>
<div class="t" style="left:624.6px;top:379.30px;font-size:15px;line-height:15px;color:#0f1722;-webkit-text-stroke:0.2px #0f1722;transform:scaleX(0.95);transform-origin:left;">FY24</div>
<div class="t" style="left:696.6px;top:379.30px;font-size:15px;line-height:15px;color:#0f1722;-webkit-text-stroke:0.2px #0f1722;transform:scaleX(0.95);transform-origin:left;">FY24</div>
<div class="t" style="left:768.6px;top:379.30px;font-size:15px;line-height:15px;color:#0f1722;-webkit-text-stroke:0.2px #0f1722;transform:scaleX(0.95);transform-origin:left;">FY24</div>
<div class="t" style="left:813.6px;top:379.30px;font-size:15px;line-height:15px;color:#0f1722;-webkit-text-stroke:0.2px #0f1722;transform:scaleX(0.95);transform-origin:left;">FY24</div>
<div class="t" style="left:885.6px;top:379.30px;font-size:15px;line-height:15px;color:#0f1722;-webkit-text-stroke:0.2px #0f1722;transform:scaleX(0.95);transform-origin:left;">FY24</div>
<div class="t" style="left:957.6px;top:379.30px;font-size:15px;line-height:15px;color:#0f1722;-webkit-text-stroke:0.2px #0f1722;transform:scaleX(0.95);transform-origin:left;">FY24</div>
<div class="t" style="left:1029.6px;top:379.30px;font-size:15px;line-height:15px;color:#0f1722;-webkit-text-stroke:0.2px #0f1722;transform:scaleX(0.95);transform-origin:left;">FY24</div>
<div class="t" style="left:1101.6px;top:379.30px;font-size:15px;line-height:15px;color:#0f1722;-webkit-text-stroke:0.2px #0f1722;transform:scaleX(0.95);transform-origin:left;">FY24</div>
<div class="t" style="left:201.6px;top:426.96px;font-size:16px;line-height:16px;color:#0f1722;-webkit-text-stroke:0.2px #0f1722;transform:scaleX(0.94);transform-origin:left;">Jul</div>
<div class="t" style="left:246.6px;top:426.96px;font-size:16px;line-height:16px;color:#0f1722;-webkit-text-stroke:0.2px #0f1722;transform:scaleX(0.94);transform-origin:left;">Aug</div>
<div class="t" style="left:291.6px;top:426.96px;font-size:16px;line-height:16px;color:#0f1722;-webkit-text-stroke:0.2px #0f1722;transform:scaleX(0.94);transform-origin:left;">Sep</div>
<div class="t" style="left:399.6px;top:426.96px;font-size:16px;line-height:16px;color:#0f1722;-webkit-text-stroke:0.2px #0f1722;transform:scaleX(0.94);transform-origin:left;">Oct</div>
<div class="t" style="left:444.6px;top:426.96px;font-size:16px;line-height:16px;color:#0f1722;-webkit-text-stroke:0.2px #0f1722;transform:scaleX(0.94);transform-origin:left;">Nov</div>
<div class="t" style="left:489.6px;top:426.96px;font-size:16px;line-height:16px;color:#0f1722;-webkit-text-stroke:0.2px #0f1722;transform:scaleX(0.94);transform-origin:left;">Dec</div>
<div class="t" style="left:579.6px;top:426.96px;font-size:16px;line-height:16px;color:#0f1722;-webkit-text-stroke:0.2px #0f1722;transform:scaleX(0.94);transform-origin:left;">Jan</div>
<div class="t" style="left:624.6px;top:426.96px;font-size:16px;line-height:16px;color:#0f1722;-webkit-text-stroke:0.2px #0f1722;transform:scaleX(0.94);transform-origin:left;">Feb</div>
<div class="t" style="left:696.6px;top:426.96px;font-size:16px;line-height:16px;color:#0f1722;-webkit-text-stroke:0.2px #0f1722;transform:scaleX(0.94);transform-origin:left;">Mar</div>
<div class="t" style="left:813.6px;top:426.96px;font-size:16px;line-height:16px;color:#0f1722;-webkit-text-stroke:0.2px #0f1722;transform:scaleX(0.94);transform-origin:left;">Apr</div>
<div class="t" style="left:885.6px;top:426.96px;font-size:16px;line-height:16px;color:#0f1722;-webkit-text-stroke:0.2px #0f1722;transform:scaleX(0.94);transform-origin:left;">May</div>
<div class="t" style="left:957.6px;top:426.96px;font-size:16px;line-height:16px;color:#0f1722;-webkit-text-stroke:0.2px #0f1722;transform:scaleX(0.94);transform-origin:left;">Jun</div>
<div class="t" style="left:345.6px;top:402.76px;font-size:16px;line-height:16px;color:#0f1722;-webkit-text-stroke:0.2px #0f1722;transform:scaleX(0.94);transform-origin:left;">Q3</div>
<div class="t" style="left:534.6px;top:402.76px;font-size:16px;line-height:16px;color:#0f1722;-webkit-text-stroke:0.2px #0f1722;transform:scaleX(0.94);transform-origin:left;">Q4</div>
<div class="t" style="left:768.6px;top:402.76px;font-size:16px;line-height:16px;color:#0f1722;-webkit-text-stroke:0.2px #0f1722;transform:scaleX(0.94);transform-origin:left;">Q1</div>
<div class="t" style="left:1029.6px;top:402.76px;font-size:16px;line-height:16px;color:#0f1722;-webkit-text-stroke:0.2px #0f1722;transform:scaleX(0.94);transform-origin:left;">Q2</div>
<div class="t" style="left:1101.6px;top:402.76px;font-size:16px;line-height:16px;color:#0f1722;-webkit-text-stroke:0.2px #0f1722;transform:scaleX(0.94);transform-origin:left;">Rolling</div>
<div class="t" style="left:37.2px;top:450.76px;font-size:16px;line-height:16px;color:#0f1722;-webkit-text-stroke:0.2px #0f1722;">Units</div>
<div class="t" style="left:37.2px;top:474.76px;font-size:16px;line-height:16px;color:#0f1722;-webkit-text-stroke:0.2px #0f1722;">9000</div>
<div class="t" style="left:37.2px;top:498.76px;font-size:16px;line-height:16px;color:#0f1722;-webkit-text-stroke:0.2px #0f1722;">9800</div>
<div class="t" style="left:37.2px;top:522.76px;font-size:16px;line-height:16px;color:#0f1722;-webkit-text-stroke:0.2px #0f1722;">Employee Benefits %</div>
<div class="t" style="left:37.2px;top:546.76px;font-size:16px;line-height:16px;color:#0f1722;-webkit-text-stroke:0.2px #0f1722;transform:scaleX(0.97);transform-origin:left;">Square Feet</div>
<div class="t" style="left:37.2px;top:570.76px;font-size:16px;line-height:16px;color:#0f1722;-webkit-text-stroke:0.2px #0f1722;">Trips</div>
<div class="t" style="left:37.2px;top:594.76px;font-size:16px;line-height:16px;color:#0f1722;-webkit-text-stroke:0.2px #0f1722;">9801</div>
<div class="t" style="right:927.5px;top:450.76px;font-size:16px;line-height:16px;color:#0f1722;-webkit-text-stroke:0.2px #0f1722;">8900</div>
<div class="t" style="right:882.5px;top:450.76px;font-size:16px;line-height:16px;color:#0f1722;-webkit-text-stroke:0.2px #0f1722;">6789</div>
<div class="t" style="right:828.5px;top:450.76px;font-size:16px;line-height:16px;color:#0f1722;-webkit-text-stroke:0.2px #0f1722;">78986</div>
<div class="t" style="right:774.5px;top:450.76px;font-size:16px;line-height:16px;color:#0f1722;-webkit-text-stroke:0.2px #0f1722;">94675</div>
<div class="t" style="right:729.5px;top:450.76px;font-size:16px;line-height:16px;color:#0f1722;-webkit-text-stroke:0.2px #0f1722;">567</div>
<div class="t" style="right:684.5px;top:450.76px;font-size:16px;line-height:16px;color:#0f1722;-webkit-text-stroke:0.2px #0f1722;">500</div>
<div class="t" style="right:639.5px;top:450.76px;font-size:16px;line-height:16px;color:#0f1722;-webkit-text-stroke:0.2px #0f1722;">890</div>
<div class="t" style="right:594.5px;top:450.76px;font-size:16px;line-height:16px;color:#0f1722;-webkit-text-stroke:0.2px #0f1722;">1957</div>
<div class="t" style="right:549.5px;top:450.76px;font-size:16px;line-height:16px;color:#0f1722;-webkit-text-stroke:0.2px #0f1722;">788</div>
<div class="t" style="left:624.6px;top:450.76px;font-size:16px;line-height:16px;color:#0f1722;-webkit-text-stroke:0.2px #0f1722;">#Missing</div>
<div class="t" style="left:696.6px;top:450.76px;font-size:16px;line-height:16px;color:#0f1722;-webkit-text-stroke:0.2px #0f1722;">#Missing</div>
<div class="t" style="right:360.5px;top:450.76px;font-size:16px;line-height:16px;color:#0f1722;-webkit-text-stroke:0.2px #0f1722;">788</div>
<div class="t" style="left:813.6px;top:450.76px;font-size:16px;line-height:16px;color:#0f1722;-webkit-text-stroke:0.2px #0f1722;">#Missing</div>
<div class="t" style="left:885.6px;top:450.76px;font-size:16px;line-height:16px;color:#0f1722;-webkit-text-stroke:0.2px #0f1722;">#Missing</div>
<div class="t" style="left:957.6px;top:450.76px;font-size:16px;line-height:16px;color:#0f1722;-webkit-text-stroke:0.2px #0f1722;">#Missing</div>
<div class="t" style="left:1029.6px;top:450.76px;font-size:16px;line-height:16px;color:#0f1722;-webkit-text-stroke:0.2px #0f1722;">#Missing</div>
<div class="t" style="right:14.5px;top:450.76px;font-size:16px;line-height:16px;color:#0f1722;-webkit-text-stroke:0.2px #0f1722;">97420</div>
<div class="t" style="right:927.5px;top:474.76px;font-size:16px;line-height:16px;color:#0f1722;-webkit-text-stroke:0.2px #0f1722;">6</div>
<div class="t" style="right:927.5px;top:498.76px;font-size:16px;line-height:16px;color:#0f1722;-webkit-text-stroke:0.2px #0f1722;">2102</div>
<div class="t" style="right:927.5px;top:522.76px;font-size:16px;line-height:16px;color:#0f1722;-webkit-text-stroke:0.2px #0f1722;">24%</div>
<div class="t" style="right:927.5px;top:546.76px;font-size:16px;line-height:16px;color:#0f1722;-webkit-text-stroke:0.2px #0f1722;">1000</div>
<div class="t" style="right:927.5px;top:570.76px;font-size:16px;line-height:16px;color:#0f1722;-webkit-text-stroke:0.2px #0f1722;">35</div>
<div class="t" style="right:882.5px;top:474.76px;font-size:16px;line-height:16px;color:#0f1722;-webkit-text-stroke:0.2px #0f1722;">6</div>
<div class="t" style="right:882.5px;top:498.76px;font-size:16px;line-height:16px;color:#0f1722;-webkit-text-stroke:0.2px #0f1722;">2198</div>
<div class="t" style="right:882.5px;top:522.76px;font-size:16px;line-height:16px;color:#0f1722;-webkit-text-stroke:0.2px #0f1722;">24%</div>
<div class="t" style="right:882.5px;top:546.76px;font-size:16px;line-height:16px;color:#0f1722;-webkit-text-stroke:0.2px #0f1722;">1000</div>
<div class="t" style="right:882.5px;top:570.76px;font-size:16px;line-height:16px;color:#0f1722;-webkit-text-stroke:0.2px #0f1722;">35</div>
<div class="t" style="right:828.5px;top:474.76px;font-size:16px;line-height:16px;color:#0f1722;-webkit-text-stroke:0.2px #0f1722;">6</div>
<div class="t" style="right:828.5px;top:498.76px;font-size:16px;line-height:16px;color:#0f1722;-webkit-text-stroke:0.2px #0f1722;">1890</div>
<div class="t" style="right:828.5px;top:522.76px;font-size:16px;line-height:16px;color:#0f1722;-webkit-text-stroke:0.2px #0f1722;">24%</div>
<div class="t" style="right:828.5px;top:546.76px;font-size:16px;line-height:16px;color:#0f1722;-webkit-text-stroke:0.2px #0f1722;">1000</div>
<div class="t" style="right:828.5px;top:570.76px;font-size:16px;line-height:16px;color:#0f1722;-webkit-text-stroke:0.2px #0f1722;">35</div>
<div class="t" style="right:774.5px;top:474.76px;font-size:16px;line-height:16px;color:#0f1722;-webkit-text-stroke:0.2px #0f1722;">6</div>
<div class="t" style="right:774.5px;top:498.76px;font-size:16px;line-height:16px;color:#0f1722;-webkit-text-stroke:0.2px #0f1722;">2064</div>
<div class="t" style="right:774.5px;top:522.76px;font-size:16px;line-height:16px;color:#0f1722;-webkit-text-stroke:0.2px #0f1722;">24%</div>
<div class="t" style="right:774.5px;top:546.76px;font-size:16px;line-height:16px;color:#0f1722;-webkit-text-stroke:0.2px #0f1722;">1000</div>
<div class="t" style="right:774.5px;top:570.76px;font-size:16px;line-height:16px;color:#0f1722;-webkit-text-stroke:0.2px #0f1722;">90</div>
<div class="t" style="right:729.5px;top:474.76px;font-size:16px;line-height:16px;color:#0f1722;-webkit-text-stroke:0.2px #0f1722;">6</div>
<div class="t" style="right:729.5px;top:498.76px;font-size:16px;line-height:16px;color:#0f1722;-webkit-text-stroke:0.2px #0f1722;">2118</div>
<div class="t" style="right:729.5px;top:522.76px;font-size:16px;line-height:16px;color:#0f1722;-webkit-text-stroke:0.2px #0f1722;">24%</div>
<div class="t" style="right:729.5px;top:546.76px;font-size:16px;line-height:16px;color:#0f1722;-webkit-text-stroke:0.2px #0f1722;">1000</div>
<div class="t" style="right:729.5px;top:570.76px;font-size:16px;line-height:16px;color:#0f1722;-webkit-text-stroke:0.2px #0f1722;">30</div>
<div class="t" style="right:684.5px;top:474.76px;font-size:16px;line-height:16px;color:#0f1722;-webkit-text-stroke:0.2px #0f1722;">6</div>
<div class="t" style="right:684.5px;top:498.76px;font-size:16px;line-height:16px;color:#0f1722;-webkit-text-stroke:0.2px #0f1722;">2195</div>
<div class="t" style="right:684.5px;top:522.76px;font-size:16px;line-height:16px;color:#0f1722;-webkit-text-stroke:0.2px #0f1722;">24%</div>
<div class="t" style="right:684.5px;top:546.76px;font-size:16px;line-height:16px;color:#0f1722;-webkit-text-stroke:0.2px #0f1722;">1000</div>
<div class="t" style="right:684.5px;top:570.76px;font-size:16px;line-height:16px;color:#0f1722;-webkit-text-stroke:0.2px #0f1722;">78</div>
<div class="t" style="right:639.5px;top:474.76px;font-size:16px;line-height:16px;color:#0f1722;-webkit-text-stroke:0.2px #0f1722;">6</div>
<div class="t" style="right:639.5px;top:498.76px;font-size:16px;line-height:16px;color:#0f1722;-webkit-text-stroke:0.2px #0f1722;">2059</div>
<div class="t" style="right:639.5px;top:522.76px;font-size:16px;line-height:16px;color:#0f1722;-webkit-text-stroke:0.2px #0f1722;">24%</div>
<div class="t" style="right:639.5px;top:546.76px;font-size:16px;line-height:16px;color:#0f1722;-webkit-text-stroke:0.2px #0f1722;">1000</div>
<div class="t" style="right:639.5px;top:570.76px;font-size:16px;line-height:16px;color:#0f1722;-webkit-text-stroke:0.2px #0f1722;">30</div>
<div class="t" style="right:594.5px;top:474.76px;font-size:16px;line-height:16px;color:#0f1722;-webkit-text-stroke:0.2px #0f1722;">6</div>
<div class="t" style="right:594.5px;top:498.76px;font-size:16px;line-height:16px;color:#0f1722;-webkit-text-stroke:0.2px #0f1722;">2124</div>
<div class="t" style="right:594.5px;top:522.76px;font-size:16px;line-height:16px;color:#0f1722;-webkit-text-stroke:0.2px #0f1722;">24%</div>
<div class="t" style="right:594.5px;top:546.76px;font-size:16px;line-height:16px;color:#0f1722;-webkit-text-stroke:0.2px #0f1722;">1000</div>
<div class="t" style="right:594.5px;top:570.76px;font-size:16px;line-height:16px;color:#0f1722;-webkit-text-stroke:0.2px #0f1722;">138</div>
<div class="t" style="right:549.5px;top:474.76px;font-size:16px;line-height:16px;color:#0f1722;-webkit-text-stroke:0.2px #0f1722;">6</div>
<div class="t" style="right:549.5px;top:498.76px;font-size:16px;line-height:16px;color:#0f1722;-webkit-text-stroke:0.2px #0f1722;">2577</div>
<div class="t" style="right:549.5px;top:522.76px;font-size:16px;line-height:16px;color:#0f1722;-webkit-text-stroke:0.2px #0f1722;">25%</div>
<div class="t" style="right:549.5px;top:546.76px;font-size:16px;line-height:16px;color:#0f1722;-webkit-text-stroke:0.2px #0f1722;">1000</div>
<div class="t" style="right:549.5px;top:570.76px;font-size:16px;line-height:16px;color:#0f1722;-webkit-text-stroke:0.2px #0f1722;">30</div>
<div class="t" style="right:477.5px;top:474.76px;font-size:16px;line-height:16px;color:#0f1722;-webkit-text-stroke:0.2px #0f1722;">6</div>
<div class="t" style="right:477.5px;top:498.76px;font-size:16px;line-height:16px;color:#0f1722;-webkit-text-stroke:0.2px #0f1722;">2541</div>
<div class="t" style="right:477.5px;top:522.76px;font-size:16px;line-height:16px;color:#0f1722;-webkit-text-stroke:0.2px #0f1722;">25%</div>
<div class="t" style="right:477.5px;top:546.76px;font-size:16px;line-height:16px;color:#0f1722;-webkit-text-stroke:0.2px #0f1722;">1000</div>
<div class="t" style="right:477.5px;top:570.76px;font-size:16px;line-height:16px;color:#0f1722;-webkit-text-stroke:0.2px #0f1722;">30</div>
<div class="t" style="right:405.5px;top:474.76px;font-size:16px;line-height:16px;color:#0f1722;-webkit-text-stroke:0.2px #0f1722;">6</div>
<div class="t" style="right:405.5px;top:498.76px;font-size:16px;line-height:16px;color:#0f1722;-webkit-text-stroke:0.2px #0f1722;">2192</div>
<div class="t" style="right:405.5px;top:522.76px;font-size:16px;line-height:16px;color:#0f1722;-webkit-text-stroke:0.2px #0f1722;">25%</div>
<div class="t" style="right:405.5px;top:546.76px;font-size:16px;line-height:16px;color:#0f1722;-webkit-text-stroke:0.2px #0f1722;">1000</div>
<div class="t" style="right:405.5px;top:570.76px;font-size:16px;line-height:16px;color:#0f1722;-webkit-text-stroke:0.2px #0f1722;">30</div>
<div class="t" style="right:360.5px;top:474.76px;font-size:16px;line-height:16px;color:#0f1722;-webkit-text-stroke:0.2px #0f1722;">6</div>
<div class="t" style="right:360.5px;top:498.76px;font-size:16px;line-height:16px;color:#0f1722;-webkit-text-stroke:0.2px #0f1722;">2437</div>
<div class="t" style="right:360.5px;top:522.76px;font-size:16px;line-height:16px;color:#0f1722;-webkit-text-stroke:0.2px #0f1722;">25%</div>
<div class="t" style="right:360.5px;top:546.76px;font-size:16px;line-height:16px;color:#0f1722;-webkit-text-stroke:0.2px #0f1722;">1000</div>
<div class="t" style="right:360.5px;top:570.76px;font-size:16px;line-height:16px;color:#0f1722;-webkit-text-stroke:0.2px #0f1722;">90</div>
<div class="t" style="right:288.5px;top:474.76px;font-size:16px;line-height:16px;color:#0f1722;-webkit-text-stroke:0.2px #0f1722;">6</div>
<div class="t" style="right:288.5px;top:498.76px;font-size:16px;line-height:16px;color:#0f1722;-webkit-text-stroke:0.2px #0f1722;">2441</div>
<div class="t" style="right:288.5px;top:522.76px;font-size:16px;line-height:16px;color:#0f1722;-webkit-text-stroke:0.2px #0f1722;">25%</div>
<div class="t" style="right:288.5px;top:546.76px;font-size:16px;line-height:16px;color:#0f1722;-webkit-text-stroke:0.2px #0f1722;">1000</div>
<div class="t" style="right:288.5px;top:570.76px;font-size:16px;line-height:16px;color:#0f1722;-webkit-text-stroke:0.2px #0f1722;">30</div>
<div class="t" style="right:216.5px;top:474.76px;font-size:16px;line-height:16px;color:#0f1722;-webkit-text-stroke:0.2px #0f1722;">6</div>
<div class="t" style="right:216.5px;top:498.76px;font-size:16px;line-height:16px;color:#0f1722;-webkit-text-stroke:0.2px #0f1722;">2488</div>
<div class="t" style="right:216.5px;top:522.76px;font-size:16px;line-height:16px;color:#0f1722;-webkit-text-stroke:0.2px #0f1722;">25%</div>
<div class="t" style="right:216.5px;top:546.76px;font-size:16px;line-height:16px;color:#0f1722;-webkit-text-stroke:0.2px #0f1722;">1000</div>
<div class="t" style="right:216.5px;top:570.76px;font-size:16px;line-height:16px;color:#0f1722;-webkit-text-stroke:0.2px #0f1722;">30</div>
<div class="t" style="right:144.5px;top:474.76px;font-size:16px;line-height:16px;color:#0f1722;-webkit-text-stroke:0.2px #0f1722;">6</div>
<div class="t" style="right:144.5px;top:498.76px;font-size:16px;line-height:16px;color:#0f1722;-webkit-text-stroke:0.2px #0f1722;">2352</div>
<div class="t" style="right:144.5px;top:522.76px;font-size:16px;line-height:16px;color:#0f1722;-webkit-text-stroke:0.2px #0f1722;">25%</div>
<div class="t" style="right:144.5px;top:546.76px;font-size:16px;line-height:16px;color:#0f1722;-webkit-text-stroke:0.2px #0f1722;">1000</div>
<div class="t" style="right:144.5px;top:570.76px;font-size:16px;line-height:16px;color:#0f1722;-webkit-text-stroke:0.2px #0f1722;">30</div>
<div class="t" style="right:72.5px;top:474.76px;font-size:16px;line-height:16px;color:#0f1722;-webkit-text-stroke:0.2px #0f1722;">6</div>
<div class="t" style="right:72.5px;top:498.76px;font-size:16px;line-height:16px;color:#0f1722;-webkit-text-stroke:0.2px #0f1722;">2427</div>
<div class="t" style="right:72.5px;top:522.76px;font-size:16px;line-height:16px;color:#0f1722;-webkit-text-stroke:0.2px #0f1722;">25%</div>
<div class="t" style="right:72.5px;top:546.76px;font-size:16px;line-height:16px;color:#0f1722;-webkit-text-stroke:0.2px #0f1722;">1000</div>
<div class="t" style="right:72.5px;top:570.76px;font-size:16px;line-height:16px;color:#0f1722;-webkit-text-stroke:0.2px #0f1722;">90</div>
<div class="t" style="right:14.5px;top:474.76px;font-size:16px;line-height:16px;color:#0f1722;-webkit-text-stroke:0.2px #0f1722;">6</div>
<div class="t" style="right:14.5px;top:498.76px;font-size:16px;line-height:16px;color:#0f1722;-webkit-text-stroke:0.2px #0f1722;">2263</div>
<div class="t" style="right:14.5px;top:522.76px;font-size:16px;line-height:16px;color:#0f1722;-webkit-text-stroke:0.2px #0f1722;">25%</div>
<div class="t" style="right:14.5px;top:546.76px;font-size:16px;line-height:16px;color:#0f1722;-webkit-text-stroke:0.2px #0f1722;">1000</div>
<div class="t" style="right:14.5px;top:570.76px;font-size:16px;line-height:16px;color:#0f1722;-webkit-text-stroke:0.2px #0f1722;">408</div>
<svg class="r" style="left:35px;top:470px;" width="7" height="7" viewBox="0 0 7 7"><path d="M0 0 H6.5 L0 6.5 Z" fill="#1e7b3c"/></svg>
<svg class="r" style="left:35px;top:494px;" width="7" height="7" viewBox="0 0 7 7"><path d="M0 0 H6.5 L0 6.5 Z" fill="#1e7b3c"/></svg>
<svg class="r" style="left:35px;top:590px;" width="7" height="7" viewBox="0 0 7 7"><path d="M0 0 H6.5 L0 6.5 Z" fill="#1e7b3c"/></svg>
<div class="r" style="left:523px;top:172px;width:271px;height:76px;background:#fff;border:1px solid #d4d4d4;border-radius:7px;box-sizing:border-box;box-shadow:0 3px 8px rgba(0,0,0,0.14)"></div>
<svg class="r" style="left:540px;top:180px;" width="19" height="19" viewBox="0 0 19 19"><ellipse cx="8" cy="3.5" rx="6.5" ry="2.8" fill="#e8e8e8" stroke="#b0b0b0" stroke-width="1"/><path d="M1.5 3.5 V15 A6.5 2.8 0 0 0 14.5 15 V3.5" fill="#dedede" stroke="#b0b0b0" stroke-width="1"/><path d="M3 8 A6 2.5 0 0 0 13 8 M3 12 A6 2.5 0 0 0 13 12" fill="none" stroke="#c4c4c4" stroke-width="0.8"/><path d="M12 7 L17.5 11 L12 15 Z" fill="#d0d0d0" stroke="#a8a8a8" stroke-width="0.8"/></svg>
<div class="t" style="left:570.2px;top:184.69px;font-size:14.9px;line-height:14.9px;color:#a3a3a3;">Submit Data</div>
<div class="r" style="left:586px;top:200px;width:9px;height:1px;background:#a3a3a3;"></div>
<svg class="r" style="left:536px;top:214px;" width="25" height="23" viewBox="0 0 25 23"><defs><linearGradient id="cy" x1="0" y1="0" x2="1" y2="0"><stop offset="0" stop-color="#3a3a72"/><stop offset="0.45" stop-color="#d9dcec"/><stop offset="1" stop-color="#4a4c84"/></linearGradient><linearGradient id="bo" x1="0" y1="0" x2="1" y2="1"><stop offset="0" stop-color="#bfe3ff"/><stop offset="1" stop-color="#3d96e6"/></linearGradient></defs><path d="M2.5 4 A7.8 3 0 0 1 18.1 4 V15.5 A7.8 3 0 0 1 2.5 15.5 Z" fill="url(#cy)" stroke="#34346a" stroke-width="1"/><ellipse cx="10.3" cy="4" rx="7.8" ry="3" fill="#6a6ca0" stroke="#34346a" stroke-width="1"/><path d="M3 8.5 A7.5 2.6 0 0 0 17.6 8.5 M3 12 A7.5 2.6 0 0 0 17.6 12" fill="none" stroke="#8c8fb8" stroke-width="0.9"/><path d="M12.5 13 A5 5 0 0 1 21 11 L22.5 9.5 V14 H18 L19.5 12.5 A3 3 0 0 0 14.5 13.5 Z" fill="url(#bo)" stroke="#2a78c8" stroke-width="0.7"/><path d="M22.5 17 A5 5 0 0 1 14 19 L12.5 20.5 V16 H17 L15.5 17.5 A3 3 0 0 0 20.5 16.5 Z" fill="url(#bo)" stroke="#2a78c8" stroke-width="0.7"/><path d="M12 9 L22.5 21.5" stroke="#111" stroke-width="1.6"/></svg>
<div class="t" style="left:570.2px;top:220.49px;font-size:14.9px;line-height:14.9px;color:#222;">Submit Data Without Refresh</div>
<div class="r" style="left:657px;top:235px;width:14px;height:1px;background:#222;"></div>
<div class="r" style="left:0px;top:44px;width:1px;height:573px;background:#285c3f;"></div>
<div class="r" style="left:1px;top:44px;width:1px;height:573px;background:#e2f7ea;"></div>
</body></html>
